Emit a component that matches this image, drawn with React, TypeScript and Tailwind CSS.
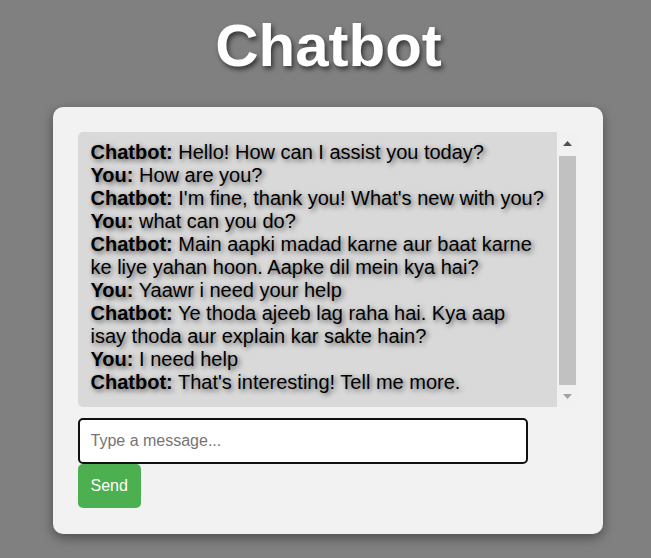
type Message = { sender: "Chatbot" | "You"; text: string };

const messages: Message[] = [
	{ sender: "Chatbot", text: "Hello! How can I assist you today?" },
	{ sender: "You", text: "How are you?" },
	{ sender: "Chatbot", text: "I'm fine, thank you! What's new with you?" },
	{ sender: "You", text: "what can you do?" },
	{
		sender: "Chatbot",
		text: "Main aapki madad karne aur baat karne ke liye yahan hoon. Aapke dil mein kya hai?",
	},
	{ sender: "You", text: "Yaawr i need your help" },
	{
		sender: "Chatbot",
		text: "Ye thoda ajeeb lag raha hai. Kya aap isay thoda aur explain kar sakte hain?",
	},
	{ sender: "You", text: "I need help" },
	{ sender: "Chatbot", text: "That's interesting! Tell me more." },
];

// the page's scrollbar is drawn by hand, headless chrome hides the native one
const ScrollBar = () => (
	<div className="w-[21px] shrink-0 bg-[#f1f1f1] flex flex-col">
		<div className="h-[22px] flex items-center justify-center pt-[1px]">
			<svg width="9" height="5" viewBox="0 0 9 5">
				<polygon points="4.5,0 9,5 0,5" fill="#505050" />
			</svg>
		</div>
		<div className="mt-[2px] mx-[2px] h-[229px] bg-[#c1c1c1]" />
		<div className="flex-1 flex items-center justify-center">
			<svg width="9" height="5" viewBox="0 0 9 5">
				<polygon points="0,0 9,0 4.5,5" fill="#a3a3a3" />
			</svg>
		</div>
	</div>
);

export default function App() {
	return (
		<div className="min-h-[558px] bg-[#808080] font-['Liberation_Sans',Arial,sans-serif] pt-[11px] pl-[4px]">
			<h1 className="text-center text-[60px] leading-[69px] font-bold text-white [text-shadow:2px_3px_5px_rgba(0,0,0,0.6)] mb-[27px] pl-[2px]">
				Chatbot
			</h1>
			<div className="mx-auto w-[550px] bg-[#f2f2f2] rounded-[10px] px-[25px] pt-[25px] pb-[26px] shadow-[0_4px_12px_rgba(0,0,0,0.4)]">
				<div className="flex h-[275px] rounded-[5px] overflow-hidden">
					<div className="flex-1 overflow-hidden bg-[#d9d9d9] pl-[13px] pr-[12px] pt-[9px] text-[20px] leading-[23px] text-black [text-shadow:2px_2px_5px_rgba(0,0,0,0.6)]">
						{messages.map((m, i) => (
							<div key={i}>
								<strong>{m.sender}:</strong> {m.text}
							</div>
						))}
					</div>
					<ScrollBar />
				</div>
				<input
					type="text"
					placeholder="Type a message..."
					className="block w-[450px] mt-[11px] h-[46px] px-[11px] border-2 border-[#111] rounded-[5px] bg-white text-[16px] placeholder:text-[#757575] outline-none"
				/>
				<button className="block h-[44px] px-[13px] bg-[#4caf50] text-white text-[16px] rounded-[5px]">
					Send
				</button>
			</div>
		</div>
	);
}
